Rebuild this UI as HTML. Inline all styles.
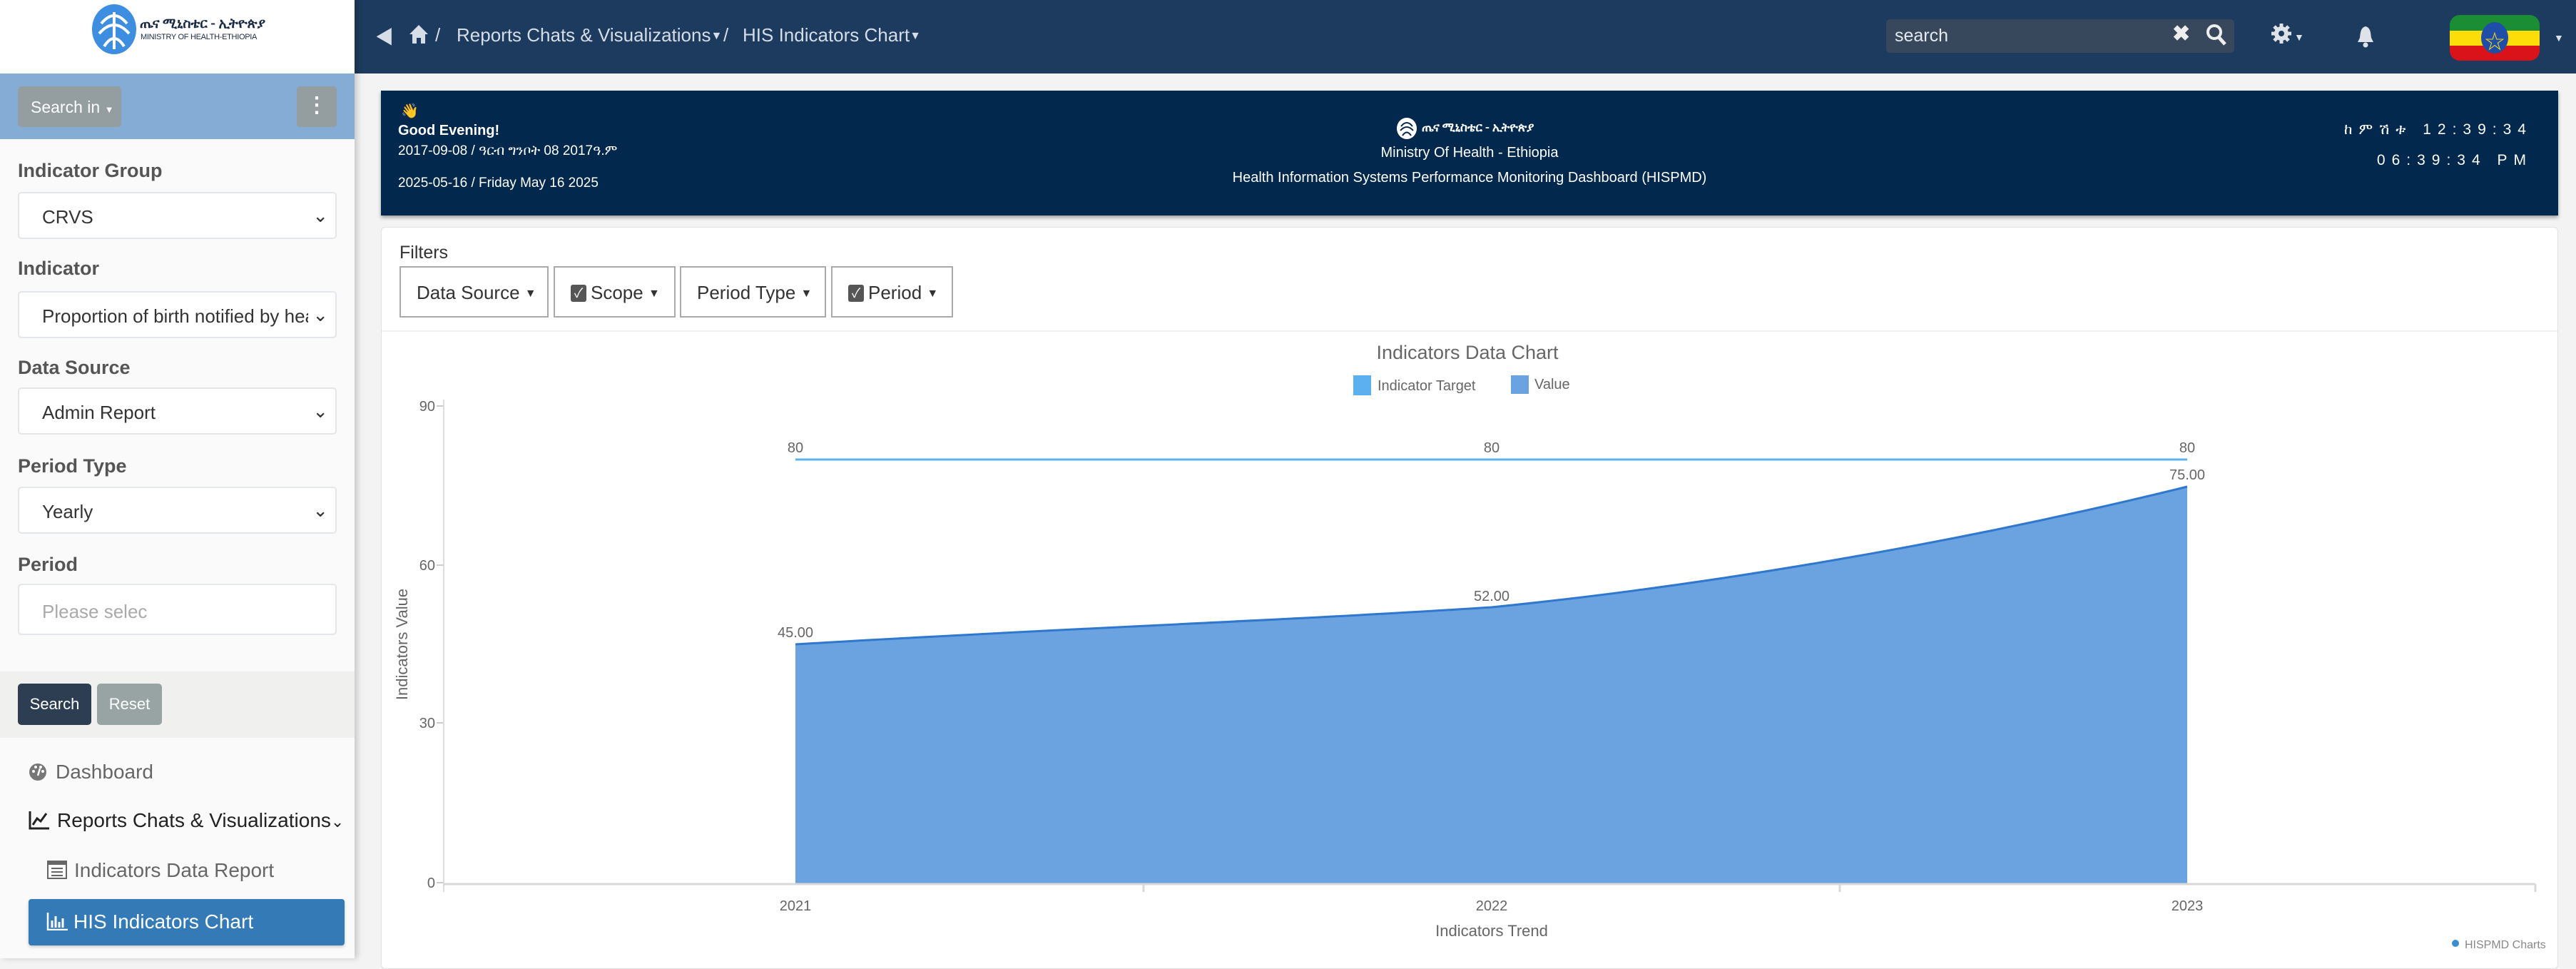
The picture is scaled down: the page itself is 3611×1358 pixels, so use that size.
<!DOCTYPE html>
<html><head><meta charset="utf-8">
<style>
*{box-sizing:border-box;margin:0;padding:0}
body{width:3611px;height:1343px;overflow:hidden;background:#f3f3f3;font-family:"Liberation Sans","Noto Sans CJK SC",sans-serif;position:relative}
.a{position:absolute}
#side{left:0;top:0;width:497px;height:1343px;background:#fafafa;box-shadow:4px 0 8px rgba(0,0,0,.18);z-index:2}
.lbl{position:absolute;left:25px;font-size:27px;font-weight:bold;color:#555}
.sel{position:absolute;left:25px;width:447px;height:66px;background:#fff;border:2px solid #e3e6ea;border-radius:5px;font-size:26px;color:#333;padding:18px 32px;white-space:nowrap;overflow:hidden}
.sel .ch{position:absolute;right:10px;top:16px;font-size:26px;color:#333;background:#fff;padding-left:6px}
#nav{left:497px;top:0;width:3114px;height:103px;background:#1c3b5e}
.bc{color:#d6dde6;font-size:26px;top:34px}
.fb{position:absolute;top:373px;height:72px;border:2px solid #aaa;background:#fff;font-size:26px;color:#333;padding:20px 22px 0;white-space:nowrap}
.cb{display:inline-block;width:22px;height:24px;background:#555;color:#fff;font-size:18px;line-height:24px;text-align:center;border-radius:3px;vertical-align:2px;margin-right:6px}
.car{font-size:16px;vertical-align:3px}
</style></head><body>

<div id="side" class="a">
  <div class="a" style="left:0;top:0;width:497px;height:103px;background:#fff"></div>
  <svg class="a" style="left:128px;top:5px" width="64" height="72" viewBox="0 0 64 72">
    <ellipse cx="32" cy="36" rx="31" ry="35" fill="#3d8ee0"/>
    <path d="M14 28 Q32 6 50 28 M11 42 Q32 18 53 42 M18 60 Q32 38 46 60 M32 12 L32 64" stroke="#fff" stroke-width="4" fill="none"/>
  </svg>
  <div class="a" style="left:196px;top:20px;font-size:19px;line-height:24px;font-weight:bold;color:#1a2a44;font-family:'Noto Sans CJK SC',sans-serif;white-space:nowrap">ጤና ሚኒስቴር - ኢትዮጵያ</div>
  <div class="a" style="left:197px;top:46px;font-size:11px;line-height:12px;color:#1a2a44;letter-spacing:-.3px;white-space:nowrap">MINISTRY OF HEALTH-ETHIOPIA</div>
  <div class="a" style="left:0;top:103px;width:497px;height:92px;background:#85acd4"></div>
  <div class="a" style="left:25px;top:121px;width:145px;height:57px;background:#949d9f;border-radius:5px;color:#fff;font-size:23px;padding:16px 0 0 18px">Search in <span style="font-size:13px">▼</span></div>
  <div class="a" style="left:416px;top:121px;width:56px;height:57px;background:#949d9f;border-radius:5px;color:#fff;font-size:30px;text-align:center;line-height:54px;font-weight:bold">⋮</div>

  <div class="lbl" style="top:224px">Indicator Group</div>
  <div class="sel" style="top:269px">CRVS<span class="ch">⌄</span></div>
  <div class="lbl" style="top:361px">Indicator</div>
  <div class="sel" style="top:408px">Proportion of birth notified by hea<span class="ch">⌄</span></div>
  <div class="lbl" style="top:500px">Data Source</div>
  <div class="sel" style="top:543px">Admin Report<span class="ch">⌄</span></div>
  <div class="lbl" style="top:638px">Period Type</div>
  <div class="sel" style="top:682px">Yearly<span class="ch">⌄</span></div>
  <div class="lbl" style="top:776px">Period</div>
  <div class="sel" style="top:818px;height:72px;color:#aaa;padding-top:22px">Please selec</div>

  <div class="a" style="left:0;top:941px;width:497px;height:93px;background:#f0f0ef"></div>
  <div class="a" style="left:25px;top:958px;width:103px;height:58px;background:#2e3e52;border-radius:5px;color:#fff;font-size:22px;text-align:center;line-height:58px">Search</div>
  <div class="a" style="left:136px;top:958px;width:91px;height:58px;background:#98a4a4;border-radius:5px;color:#fff;font-size:22px;text-align:center;line-height:58px">Reset</div>

  <div class="a" style="left:40px;top:1066px;font-size:28px;color:#666">
    <svg width="26" height="26" viewBox="0 0 26 26" style="vertical-align:-3px;margin-right:12px"><circle cx="13" cy="14" r="12" fill="#777"/><circle cx="7" cy="13" r="2" fill="#fafafa"/><circle cx="10" cy="7" r="2" fill="#fafafa"/><circle cx="17" cy="7" r="2" fill="#fafafa"/><circle cx="20" cy="13" r="2" fill="#fafafa"/><path d="M13 19 L16 9" stroke="#fafafa" stroke-width="2.5"/></svg>Dashboard</div>
  <div class="a" style="left:40px;top:1134px;font-size:28px;color:#222">
    <svg width="30" height="28" style="vertical-align:-4px;margin-right:10px"><path d="M2 2 V26 H29 M6 21 L12 12 L17 16 L25 5" stroke="#222" stroke-width="3" fill="none"/></svg>Reports Chats &amp; Visualizations<span style="font-size:22px">⌄</span></div>
  <div class="a" style="left:66px;top:1204px;font-size:28px;color:#666">
    <svg width="28" height="26" style="vertical-align:-3px;margin-right:10px"><rect x="1" y="1" width="26" height="24" fill="none" stroke="#666" stroke-width="2"/><rect x="1" y="1" width="26" height="5" fill="#666"/><path d="M6 11H22M6 16H22M6 21H22" stroke="#666" stroke-width="2"/></svg>Indicators Data Report</div>
  <div class="a" style="left:40px;top:1260px;width:443px;height:65px;background:#337ab7;border-radius:4px;box-shadow:0 2px 4px rgba(0,0,0,.2);color:#fff;font-size:28px;padding:16px 0 0 25px">
    <svg width="30" height="26" style="vertical-align:-3px;margin-right:8px"><path d="M2 1V25H30" stroke="#fff" stroke-width="2.5" fill="none"/><path d="M8 12V22M13 6V22M18 14V22M23 9V22" stroke="#fff" stroke-width="3"/></svg>HIS Indicators Chart</div>
</div>

<div id="nav" class="a"></div>
<div class="a bc" style="left:526px;top:32px;font-size:26px">◀</div>
<svg class="a" style="left:572px;top:33px" width="30" height="30" viewBox="0 0 30 30"><path d="M15 2 L28 15 H24 V28 H18 V20 H12 V28 H6 V15 H2 Z" fill="#d6dde6"/></svg>
<div class="a bc" style="left:610px">/</div>
<div class="a bc" style="left:640px">Reports Chats &amp; Visualizations<span class="car">▼</span></div>
<div class="a bc" style="left:1014px">/</div>
<div class="a bc" style="left:1041px">HIS Indicators Chart<span class="car">▼</span></div>

<div class="a" style="left:2644px;top:27px;width:488px;height:47px;background:#37485d;border-radius:5px"></div>
<div class="a" style="left:2656px;top:36px;font-size:25px;color:#e6e9ee">search</div>
<div class="a" style="left:3045px;top:30px;font-size:30px;color:#eee;font-weight:bold">✖</div>
<svg class="a" style="left:3092px;top:33px" width="30" height="32"><circle cx="12" cy="12" r="9" stroke="#eee" stroke-width="4" fill="none"/><path d="M18 19 L27 29" stroke="#eee" stroke-width="5"/></svg>
<svg class="a" style="left:3183px;top:32px" width="30" height="30" viewBox="0 0 30 30"><circle cx="15" cy="15" r="10" fill="#dfe3e8"/><path d="M15 1V29M1 15H29M5 5L25 25M25 5L5 25" stroke="#dfe3e8" stroke-width="5"/><circle cx="15" cy="15" r="4" fill="#1c3b5e"/></svg>
<div class="a" style="left:3216px;top:44px;font-size:14px;color:#dfe3e8">▼</div>
<svg class="a" style="left:3303px;top:35px" width="26" height="32" viewBox="0 0 26 32"><path d="M13 2 C6 4 6 10 5 18 L2 24 H24 L21 18 C20 10 20 4 13 2Z" fill="#dfe3e8"/><circle cx="13" cy="28" r="3.5" fill="#dfe3e8"/></svg>
<div class="a" style="left:3434px;top:21px;width:126px;height:64px;border-radius:14px;overflow:hidden">
  <div style="height:22px;background:#1b8e35"></div><div style="height:21px;background:#fcdd09"></div><div style="height:21px;background:#da121a"></div>
  <div class="a" style="left:44px;top:10px;width:38px;height:44px;border-radius:50%;background:#1f4ea8"></div>
  <div class="a" style="left:49px;top:16px;font-size:28px;color:#f7d616">☆</div>
</div>
<div class="a" style="left:3580px;top:45px;font-size:14px;color:#dfe3e8">▼</div>

<div class="a" style="left:534px;top:127px;width:3052px;height:175px;background:#02284d;box-shadow:0 3px 5px rgba(0,0,0,.35)"></div>
<div class="a" style="left:562px;top:143px;font-size:20px">👋</div>
<div class="a" style="left:558px;top:172px;font-size:20px;font-weight:bold;color:#fff">Good Evening!</div>
<div class="a" style="left:558px;top:201px;font-size:19px;color:#fff;font-family:'Liberation Sans','Noto Sans CJK SC',sans-serif">2017-09-08 / ዓርብ ግንቦት 08 2017ዓ.ም</div>
<div class="a" style="left:558px;top:246px;font-size:19px;color:#fff">2025-05-16 / Friday May 16 2025</div>
<svg class="a" style="left:1957px;top:164px" width="30" height="32" viewBox="0 0 30 32"><ellipse cx="15" cy="16" rx="14" ry="15" fill="#fff"/><path d="M7 13 Q15 3 23 13 M6 19 Q15 9 24 19 M9 26 Q15 17 21 26" stroke="#02284d" stroke-width="2" fill="none"/></svg>
<div class="a" style="left:1993px;top:166px;font-size:17px;line-height:22px;font-weight:bold;color:#fff;font-family:'Noto Sans CJK SC',sans-serif">ጤና ሚኒስቴር - ኢትዮጵያ</div>
<div class="a" style="left:1700px;top:203px;width:720px;text-align:center;font-size:20px;color:#fff">Ministry Of Health - Ethiopia</div>
<div class="a" style="left:1600px;top:238px;width:920px;text-align:center;font-size:20px;color:#fff">Health Information Systems Performance Monitoring Dashboard (HISPMD)</div>
<div class="a" style="left:3000px;top:170px;width:550px;text-align:right;font-size:21px;color:#fff;letter-spacing:9px;font-family:'Liberation Sans','Noto Sans CJK SC',sans-serif">ከምሽቱ 12:39:34</div>
<div class="a" style="left:3000px;top:213px;width:550px;text-align:right;font-size:21px;color:#fff;letter-spacing:9px">06:39:34 PM</div>

<div class="a" style="left:534px;top:318px;width:3052px;height:1040px;background:#fff;border:1px solid #e2e2e2;border-radius:6px"></div>
<div class="a" style="left:560px;top:340px;font-size:25px;color:#333">Filters</div>
<div class="fb" style="left:560px;width:209px">Data Source <span class="car">▼</span></div>
<div class="fb" style="left:776px;width:171px"><span class="cb">✓</span>Scope <span class="car">▼</span></div>
<div class="fb" style="left:953px;width:205px">Period Type <span class="car">▼</span></div>
<div class="fb" style="left:1165px;width:171px"><span class="cb">✓</span>Period <span class="car">▼</span></div>
<div class="a" style="left:535px;top:463px;width:3050px;height:2px;background:#f0f0f0"></div>

<svg class="a" style="left:0;top:0" width="3611" height="1343" font-family="Liberation Sans, sans-serif">
  <text x="2057" y="503" text-anchor="middle" font-size="27" fill="#666">Indicators Data Chart</text>
  <rect x="1897" y="526" width="25" height="28" fill="#5cb0f0"/>
  <text x="1931" y="547" font-size="20" fill="#666">Indicator Target</text>
  <rect x="2118" y="526" width="25" height="26" fill="#6aa3e0"/>
  <text x="2151" y="545" font-size="20" fill="#666">Value</text>
  <g font-size="20" fill="#666" text-anchor="end">
    <text x="610" y="576">90</text><text x="610" y="799">60</text><text x="610" y="1020">30</text><text x="610" y="1244">0</text>
  </g>
  <path d="M612 569H622M612 792H622M612 1013H622M612 1237H622" stroke="#ccc" stroke-width="2"/>
  <path d="M622 560V1250" stroke="#ddd" stroke-width="2"/>
  <path d="M1115 903 C1500 880 1800 870 2091 851 C2400 820 2750 760 3066 682 L3066 1239 L1115 1239 Z" fill="#6aa3e0"/>
  <path d="M1115 903 C1500 880 1800 870 2091 851 C2400 820 2750 760 3066 682" stroke="#2f77cf" stroke-width="3" fill="none"/>
  <path d="M1115 644H3066" stroke="#5cb0f0" stroke-width="3"/>
  <path d="M622 1239H3554M1603 1239V1250M2579 1239V1250M3554 1239V1250" stroke="#d8d8d8" stroke-width="3"/>
  <g font-size="20" fill="#666" text-anchor="middle">
    <text x="1115" y="634">80</text><text x="2091" y="634">80</text><text x="3066" y="634">80</text>
    <text x="1115" y="893">45.00</text><text x="2091" y="842">52.00</text><text x="3066" y="672">75.00</text>
    <text x="1115" y="1276">2021</text><text x="2091" y="1276">2022</text><text x="3066" y="1276">2023</text>
    <text x="2091" y="1312" font-size="22">Indicators Trend</text>
  </g>
  <text transform="translate(571 903) rotate(-90)" text-anchor="middle" font-size="22" fill="#666">Indicators Value</text>
  <circle cx="3442" cy="1322" r="5" fill="#3a8ecf"/>
  <text x="3455" y="1329" font-size="16" fill="#888">HISPMD Charts</text>
</svg>
</body></html>
